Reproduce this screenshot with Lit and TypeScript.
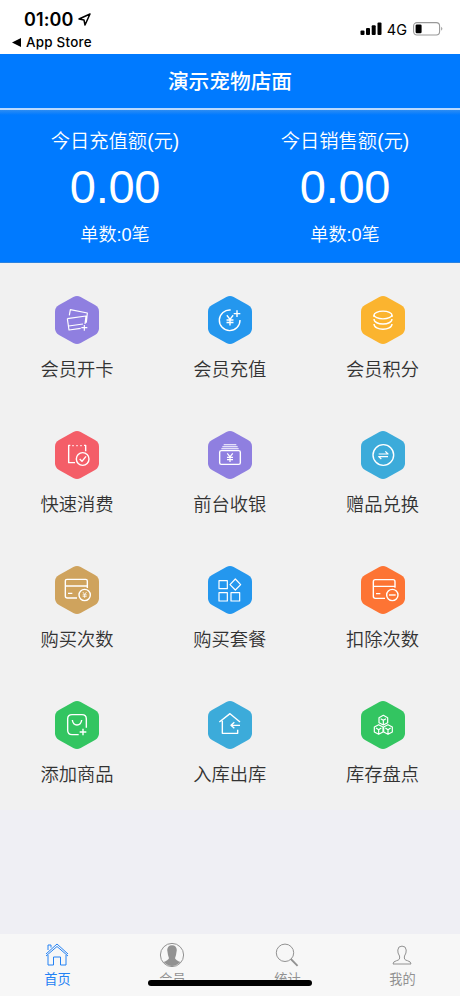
import { LitElement, html, svg, css } from "lit";
import { customElement } from "lit/decorators.js";

const yen = (x: number, y: number, s: number) =>
  svg`<path transform="translate(${x} ${y}) scale(${s})" stroke-width="4.4" d="M-10-16L0-3L10-16M0-3V16M-11-1H11M-11 7H11"/>`;

const cube = (x: number, y: number) =>
  svg`<path transform="translate(${x} ${y})" stroke-width="3.6" d="M0-15L13-8V7L0 14L-13 7V-8ZM-8-5L0 0L8-5M0 0V13"/>`;

const tiles = [
  { label: "会员开卡", color: "#8f7fe0", icon: svg`<path stroke-width="3.5" d="M43 58L46 41L97 51L94 80M37 68L93 60L90 84M37 68L42 102L77 97M41 90L84 84M88 87V104M79 95H97"/>` },
  { label: "会员充值", color: "#2497ee", icon: svg`<path d="M68 42A31 31 0 1 0 96 72M87 43V63M77 53H97"/>${yen(66, 73, 0.95)}` },
  { label: "会员积分", color: "#fbb42f", icon: svg`<ellipse cx="66" cy="57" rx="27" ry="11.5"/><path d="M39 69C39 89 93 89 93 69M39 84C39 105 93 105 93 84M39 57V63M93 57V63"/>` },
  { label: "快速消费", color: "#f45e68", icon: svg`<path d="M60 95H41V43H46M92 61V43H87M52 44H56M64 44H68M76 44H80"/><circle cx="83" cy="84" r="19"/><path d="M74 84L81 91L93 76"/>` },
  { label: "前台收银", color: "#8f7fe0", icon: svg`<path d="M47 41.5H85M43 47.5H89M40 53.5H92" stroke-width="3.2"/><rect x="35" y="59" width="62" height="41" rx="5"/>${yen(66, 80, 0.82)}` },
  { label: "赠品兑换", color: "#3cabda", icon: svg`<circle cx="67" cy="72" r="31"/><path stroke-width="3.6" d="M53 69H81L73 61M81 77H53L61 84"/>` },
  { label: "购买次数", color: "#cfa35d", icon: svg`<path d="M66 96H37Q31 96 31 90V44Q31 40 36 40H92Q97 40 97 45V66M31 60H97M39 82H52"/><circle cx="89" cy="87" r="17"/>${yen(89, 87, 0.55)}` },
  { label: "购买套餐", color: "#2497ee", icon: svg`<g stroke-width="3.6"><rect x="33" y="44" width="25" height="24"/><rect x="33" y="80" width="25" height="25"/><rect x="69" y="80" width="26" height="25"/><path d="M82 39L98 56L82 72L66 56Z"/></g>` },
  { label: "扣除次数", color: "#fd7434", icon: svg`<path d="M72 97H43Q37 97 37 91V47Q37 41 43 41H96Q102 41 102 47V65M37 61H102M45 83H58"/><circle cx="94" cy="87" r="17"/><path d="M84 87H104"/>` },
  { label: "添加商品", color: "#33c561", icon: svg`<path d="M71 101H51Q38 101 38 88V54Q38 41 51 41H81Q94 41 94 54V80M52 57Q54 72 66 72Q78 72 80 57M84 83V103M74 93H94"/>` },
  { label: "入库出库", color: "#3cabda", icon: svg`<path d="M34 63L66 38L96 63M43 59V97H89V86M96 73H70M79 64L69 73L79 82"/>` },
  { label: "库存盘点", color: "#33c561", icon: svg`${cube(67, 58)}${cube(53, 86)}${cube(81, 86)}` },
];

const tabs = [
  { label: "首页", active: true, icon: svg`<path d="M3 12L14 2L25 12M3 14L14 4.5L25 14M5 8V3H8V5.6M5 13V23H10.5V15H17.5V23H23V13"/>` },
  { label: "会员", active: false, icon: svg`<circle cx="14" cy="13" r="11.6"/><path class="solid" d="M9.2 8Q9.5 3.2 14 3.2Q18.5 3.2 18.8 8L18 13L17 16.3Q18 18.6 22.4 20Q14 28 5.6 20Q10 18.6 11 16.3L10 13Z"/>` },
  { label: "统计", active: false, icon: svg`<circle cx="12" cy="10.8" r="8.7"/><path d="M17.8 17L24.6 23.8" stroke-width="1.8"/>` },
  { label: "我的", active: false, icon: svg`<path d="M11.5 14Q9.5 11 9.8 8Q10 4.1 14 4.1Q18 4.1 18.2 8Q18.5 11 16.5 14C15.8 17.3 17 18 19.5 18.7Q23 19.5 23 22H5Q5 19.5 8.5 18.7C11 18 12.2 17.3 11.5 14Z"/>` },
];

@customElement("app-root")
export class AppRoot extends LitElement {
  static styles = css`
    :host {
      display: flex;
      flex-direction: column;
      position: relative;
      height: 996px;
      overflow: hidden;
      background: #efeff4;
      color: #333;
      font-family: "Liberation Sans", "Noto Sans CJK SC", sans-serif;
    }
    svg { display: block; fill: none; stroke: currentColor; }
    .status {
      height: 54px;
      flex: none;
      display: flex;
      justify-content: space-between;
      background: #fff;
      color: #000;
      font-family: Inter, sans-serif;
    }
    .clock { display: flex; align-items: center; gap: 5px; padding: 9px 0 0 24px; font-size: 18px; line-height: 22px; font-weight: 600; letter-spacing: 0.1px; }
    .clock svg { margin-top: -2px; }
    .back { display: flex; align-items: center; gap: 5px; padding-left: 12px; margin-top: 2px; font-size: 13.4px; line-height: 18px; font-weight: 500; letter-spacing: 0.25px; }
    .signals { display: flex; align-items: center; height: 14px; margin: 22px 17px 0 0; font-size: 14.5px; font-weight: 400; }
    .network { margin: 0 6px 0 5px; }
    .title {
      height: 54px;
      flex: none;
      background: #007aff;
      color: #fff;
      text-align: center;
      font-size: 20.7px;
      line-height: 56px;
      font-weight: 500;
    }
    .summary {
      height: 155px;
      flex: none;
      box-sizing: border-box;
      display: grid;
      grid-template-columns: 1fr 1fr;
      color: #fff;
      text-align: center;
      background: linear-gradient(#b9d9ff 0 2px, #2d8cf2 2px, #007aff 7px);
      border-bottom: 1px solid #2c83e0;
      padding-top: 20px;
      font-family: "Liberation Sans", "Noto Sans CJK SC DemiLight", "Noto Sans CJK SC", sans-serif;
      font-weight: 350;
    }
    .caption { font-size: 19.3px; line-height: 28px; }
    .amount { font-size: 47px; line-height: 54px; margin-top: 4px; letter-spacing: -0.3px; }
    .count { font-size: 18.1px; line-height: 26px; margin-top: 8px; }
    .grid {
      flex: none;
      box-sizing: border-box;
      display: grid;
      grid-template-columns: repeat(3, 152.8px);
      grid-auto-rows: 135px;
      padding: 7px 0 0 0.6px;
      background: #f1f1f1;
      height: 547px;
      font-family: "Noto Sans CJK SC DemiLight", "Noto Sans CJK SC", sans-serif;
      font-weight: 350;
    }
    .tile { display: flex; flex-direction: column; align-items: center; padding-top: 26px; }
    .hex { width: 44px; height: 48px; color: #fff; stroke-width: 4.2; stroke-linejoin: round; }
    .label { font-size: 18.3px; line-height: 28px; margin-top: 10px; }
    .tabs {
      margin-top: auto;
      height: 62px;
      display: grid;
      grid-template-columns: repeat(4, 1fr);
      background: #f7f7f7;
      color: #929292;
    }
    .tab { display: flex; flex-direction: column; align-items: center; padding-top: 8px; }
    .tab svg { width: 28px; height: 27px; stroke-width: 1; margin-right: 1px; }
    .active { color: #2482f4; }
    .name { font-size: 13.2px; line-height: 20px; margin-top: 1px; }
    .solid { fill: currentColor; stroke: none; }
    .indicator { position: absolute; left: 148px; bottom: 10.5px; width: 164px; height: 6px; border-radius: 3px; background: #000; }
  `;

  render() {
    return html`
      <div class="status">
        <div>
          <div class="clock">01:00
            <svg width="13" height="13" viewBox="0 0 13 13" stroke-width="1.5" stroke-linejoin="round"><path d="M12 1L1 6L6 7L7 12Z"/></svg>
          </div>
          <div class="back">
            <svg width="9" height="9" viewBox="0 0 9 9"><path class="solid" d="M0 4.5L9 0V9Z"/></svg>App Store
          </div>
        </div>
        <div class="signals">
          <svg width="22" height="14" viewBox="0 0 22 14"><g class="solid"><rect x="0.5" y="8.5" width="4" height="4.5" rx="1"/><rect x="6" y="6" width="4" height="7" rx="1"/><rect x="11.7" y="3.3" width="4" height="9.7" rx="1"/><rect x="17.5" y="0.5" width="4" height="12.5" rx="1"/></g></svg>
          <span class="network">4G</span>
          <svg width="30" height="14" viewBox="0 0 30 14"><rect x="0.6" y="0.6" width="26" height="12.4" rx="3.4" stroke="#999" stroke-width="1.1"/><rect class="solid" x="2.6" y="2.5" width="6" height="8.8" rx="1.3"/><path d="M28.2 4.8Q30.5 6.8 28.2 8.8Z" fill="#999" stroke="none"/></svg>
        </div>
      </div>
      <div class="title">演示宠物店面</div>
      <div class="summary">
        ${["今日充值额(元)", "今日销售额(元)"].map((caption) => html`
          <div>
            <div class="caption">${caption}</div>
            <div class="amount">0.00</div>
            <div class="count">单数:0笔</div>
          </div>`)}
      </div>
      <div class="grid">
        ${tiles.map((t) => html`
          <div class="tile">
            <svg class="hex" viewBox="0 0 132 144">
              <path fill=${t.color} stroke="none" d="M55 3Q66-3 77 3L120 27Q132 34 132 47V97Q132 110 120 117L77 141Q66 147 55 141L12 117Q0 110 0 97V47Q0 34 12 27Z"/>
              ${t.icon}
            </svg>
            <div class="label">${t.label}</div>
          </div>`)}
      </div>
      <div class="tabs">
        ${tabs.map((t) => html`
          <div class="tab ${t.active ? "active" : ""}">
            <svg viewBox="0 0 28 27">${t.icon}</svg>
            <div class="name">${t.label}</div>
          </div>`)}
      </div>
      <div class="indicator"></div>
    `;
  }
}
